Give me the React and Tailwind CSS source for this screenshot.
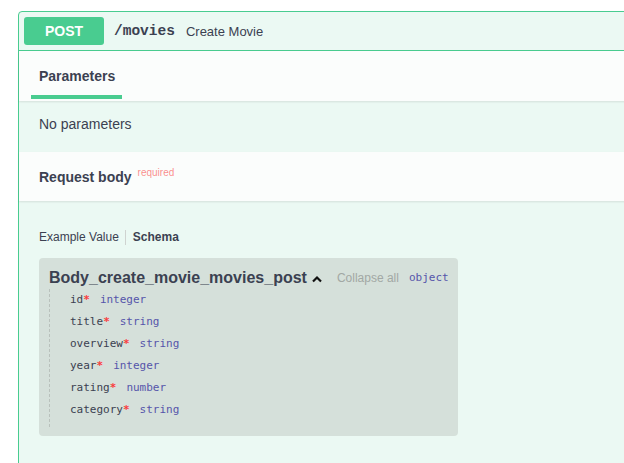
export default function App() {
  const props = [
    { name: "id", type: "integer" },
    { name: "title", type: "string" },
    { name: "overview", type: "string" },
    { name: "year", type: "integer" },
    { name: "rating", type: "number" },
    { name: "category", type: "string" },
  ];

  return (
    <div className="h-[463px] w-[624px] overflow-hidden bg-white pl-[18px] pt-[11px] font-['Liberation_Sans',Arial,sans-serif] text-[#3b4151]">
      <div className="h-[470px] w-[640px] rounded-tl-[4px] border border-[#49cc90] bg-[#ebf9f3]">
        {/* summary */}
        <div className="flex h-[39px] items-center border-b border-[#49cc90] px-[5px]">
          <div className="flex h-[28px] w-[80px] items-center justify-center rounded-[3px] bg-[#49cc90] text-[14px] font-bold text-white">
            POST
          </div>
          <span className="ml-[10px] pt-[2px] font-['Liberation_Mono',monospace] text-[14.5px] font-bold">
            /movies
          </span>
          <span className="ml-[11px] pt-[2px] text-[13px]">Create Movie</span>
        </div>

        {/* parameters header */}
        <div className="flex h-[50px] items-end bg-[#fbfdfc] px-[12px] shadow-[0_1px_2px_rgba(0,0,0,0.1)]">
          <div className="flex h-full w-[91px] flex-col">
            <div className="flex flex-1 items-center pl-[8px] pt-[6px] text-[14px] font-bold">
              Parameters
            </div>
            <div className="mb-[2px] h-[4px] w-full bg-[#49cc90]" />
          </div>
        </div>

        <div className="flex h-[51px] items-center px-[20px] pb-[4px] text-[14px]">
          No parameters
        </div>

        {/* request body header */}
        <div className="flex h-[49px] items-center bg-[#fbfdfc] px-[20px] pt-[1px] shadow-[0_1px_2px_rgba(0,0,0,0.1)]">
          <span className="text-[14px] font-bold">Request body</span>
          <span className="ml-[6px] -mt-[10px] text-[10px] text-[#f93e3e]/60">required</span>
        </div>

        <div className="px-[20px] pt-[27px]">
          <div className="flex items-center text-[12px]">
            <span>Example Value</span>
            <span className="mx-[6px] h-[15px] w-px bg-[#cfd3d0]" />
            <span className="ml-[1px] font-bold">Schema</span>
          </div>

          <div className="mt-[12px] h-[178px] w-[419px] rounded-[4px] bg-[#d5e0da] pl-[10px] pt-[8px]">
            <div className="flex items-center">
              <span className="text-[16px] font-bold">Body_create_movie_movies_post</span>
              <svg width="12" height="8" viewBox="0 0 12 8" className="ml-[4px] mt-[1px]">
                <path d="M2 6.5 L6 2.5 L10 6.5" fill="none" stroke="#111" strokeWidth="2.2" />
              </svg>
              <span className="ml-[14px] text-[12px] text-[#a2a8a4]">Collapse all</span>
              <span className="ml-[10px] font-['DejaVu_Sans_Mono',monospace] text-[11px] text-[#55a]">
                object
              </span>
            </div>
            <div className="-mt-px border-l border-dashed border-[#b9c1bc] pl-[20px] pb-[6px] font-['DejaVu_Sans_Mono',monospace] text-[11px]">
              {props.map((p) => (
                <div key={p.name} className="flex h-[22px] items-center">
                  <span className="text-[#3b4151]">{p.name}</span>
                  <span className="font-bold text-[#f93e3e]">*</span>
                  <span className="ml-[10px] text-[#55a]">{p.type}</span>
                </div>
              ))}
            </div>
          </div>
        </div>
      </div>
    </div>
  );
}
